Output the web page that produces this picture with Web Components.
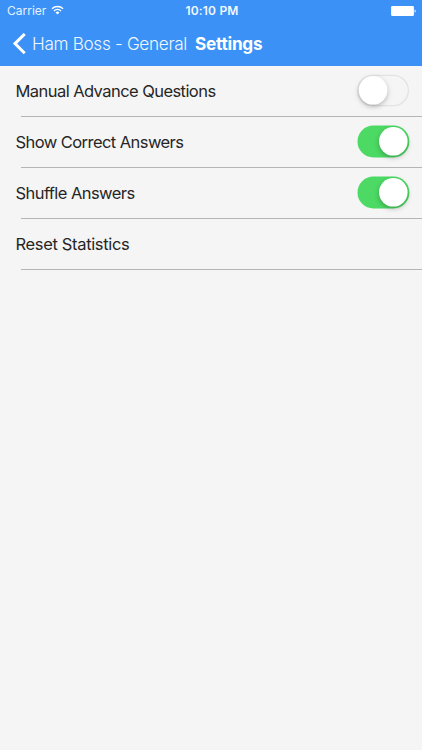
<!DOCTYPE html>
<html lang="en">
<head>
<meta charset="utf-8">
<title>Settings</title>
<style>
html,body{margin:0;height:100%;background:#f5f5f5}
</style>
</head>
<body>
<settings-screen></settings-screen>
<script>
const define = (name, html) => customElements.define(name, class extends HTMLElement {
  constructor() {
    super();
    this.attachShadow({ mode: 'open' }).innerHTML = html;
  }
});

define('status-bar', `
<style>
:host{display:grid;grid-template-columns:1fr auto 1fr;align-items:center;height:22px;padding:0 6px 0 7px;box-sizing:border-box;font-size:12px;line-height:22px}
.left{display:flex;align-items:center;gap:5px;letter-spacing:0;color:#e6f1fe}
.time{font-weight:600;letter-spacing:.2px;color:#f2f8ff;padding-left:1px}
.right{display:flex;justify-content:flex-end}
svg{display:block}
.left svg{margin-top:-2px}
</style>
<div class="left"><span>Carrier</span>
<svg width="13" height="10.2" viewBox="0 0 14 11" fill="none" stroke="#fff" stroke-width="1.5"><path d="M1 4.1a8.6 8.6 0 0 1 12 0M3.2 6.4a5.5 5.5 0 0 1 7.6 0"/><path d="M7 10.2L4.9 8.1a3 3 0 0 1 4.2 0z" fill="#fff" stroke="none"/></svg></div>
<span class="time">10:10 PM</span>
<div class="right"><svg width="25" height="11" viewBox="0 0 25 11"><rect x=".1" y=".1" width="22.8" height="9.8" rx="1.2" fill="#fff"/><path d="M23.6 3.4c1.5.3 1.5 2.9 0 3.2z" fill="#fff"/></svg></div>`);

define('nav-bar', `
<style>
:host{display:flex;align-items:center;height:43.5px;padding-left:12px;font-size:17.2px;line-height:43px;white-space:nowrap}
svg{display:block;margin-right:6px}
.back{font-weight:300;letter-spacing:-.33px;color:#f0f7ff;width:163px}
.title{font-weight:700;letter-spacing:-.25px}
</style>
<svg width="14" height="22" viewBox="0 0 14 22" fill="none" stroke="#fff" stroke-width="3"><path d="M12.7 1L3 10.6l9.7 9.6"/></svg>
<span class="back"><slot name="back"></slot></span>
<span class="title"><slot></slot></span>`);

define('toggle-switch', `
<style>
:host{display:block}
svg{display:block;overflow:visible}
.knob{filter:drop-shadow(0 2.5px 2.5px rgba(0,0,0,.25))}
.on,:host([on]) .off{display:none}
:host([on]) .on{display:inline}
:host([on]) .knob{transform:translateX(20.2px)}
</style>
<svg width="52" height="32" viewBox="0 0 52 32">
<rect class="off" x=".8" y=".4" width="50.6" height="30.2" rx="15.1" fill="none" stroke="#e3e3e3" stroke-width="1.3"/>
<rect class="on" x=".5" y="-.4" width="51.9" height="31.8" rx="15.9" fill="#4cd964"/>
<circle class="knob" cx="16.1" cy="15.3" r="14.3" fill="#fff"/>
</svg>`);

define('settings-row', `
<style>
:host{display:flex;flex-direction:column;height:50.8px}
.row{flex:1;display:flex;align-items:center;justify-content:space-between;padding:0 13px 0 15.5px;font-size:16.5px;line-height:20px;letter-spacing:var(--tracking,-.56px);color:#262626}
.line{height:1px;margin-left:21px;background:#b5b5b5}
</style>
<div class="row"><span><slot></slot></span><slot name="control"></slot></div><div class="line"></div>`);

define('settings-screen', `
<style>
:host{display:block;height:750px;overflow:hidden;background:#f5f5f5;color:#fff;font-family:Inter,"Liberation Sans",sans-serif}
header{background:#3b91f5}
main{padding-top:1px}
.short{--tracking:-.34px}
</style>
<header><status-bar></status-bar><nav-bar><span slot="back">Ham Boss - General</span>Settings</nav-bar></header>
<main>
<settings-row>Manual Advance Questions<toggle-switch slot="control"></toggle-switch></settings-row>
<settings-row>Show Correct Answers<toggle-switch slot="control" on></toggle-switch></settings-row>
<settings-row>Shuffle Answers<toggle-switch slot="control" on></toggle-switch></settings-row>
<settings-row class="short">Reset Statistics</settings-row>
</main>`);
</script>
</body>
</html>
